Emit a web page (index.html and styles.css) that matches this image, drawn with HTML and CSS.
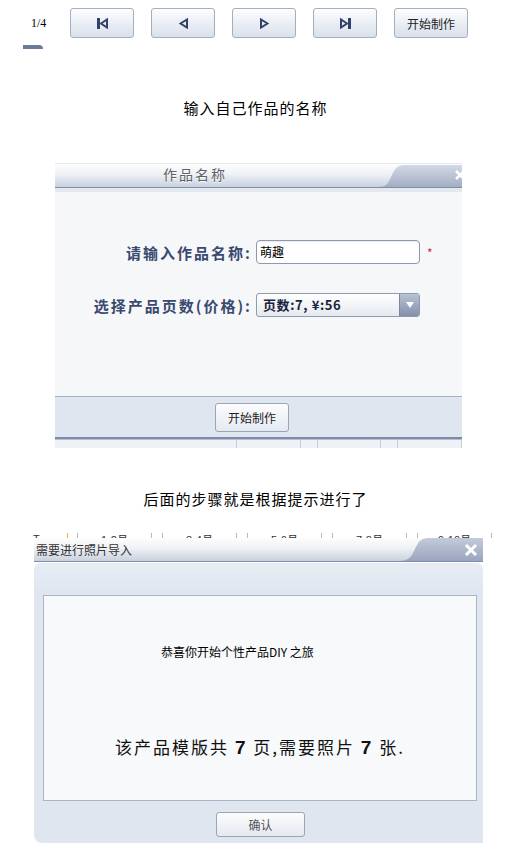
FILE: index.html
```html
<!DOCTYPE html>
<html lang="zh-CN">
<head>
    <meta charset="UTF-8">
    <title>作品制作步骤</title>
    <link rel="stylesheet" href="styles.css">
</head>
<body>
    <div class="toolbar">
        <span class="pager">1/4</span>
        <button class="nav-btn" title="首页">
            <svg width="11" height="11" viewBox="0 0 11 11"><rect x="0" y="0" width="3" height="11" fill="#34426a"/><polygon points="4,5.5 10,1.5 10,9.5" fill="none" stroke="#34426a" stroke-width="2"/></svg>
        </button>
        <button class="nav-btn" title="上一页">
            <svg width="9" height="11" viewBox="0 0 9 11"><polygon points="1.5,5.5 8,1.5 8,9.5" fill="none" stroke="#34426a" stroke-width="2"/></svg>
        </button>
        <button class="nav-btn" title="下一页">
            <svg width="9" height="11" viewBox="0 0 9 11"><polygon points="7.5,5.5 1,1.5 1,9.5" fill="none" stroke="#34426a" stroke-width="2"/></svg>
        </button>
        <button class="nav-btn" title="末页">
            <svg width="11" height="11" viewBox="0 0 11 11"><polygon points="7,5.5 1,1.5 1,9.5" fill="none" stroke="#34426a" stroke-width="2"/><rect x="8" y="0" width="3" height="11" fill="#34426a"/></svg>
        </button>
        <button class="nav-btn text-btn">开始制作</button>
    </div>
    <div class="tab-bit"></div>

    <p class="caption first">输入自己作品的名称</p>

    <div class="dialog name-dialog">
        <div class="dlg-head">
            <span class="dlg-title centered">作品名称</span>
            <svg class="dlg-tab" width="84" height="23" viewBox="0 0 84 23">
                <defs>
                    <linearGradient id="tabA" x1="0" y1="0" x2="0" y2="1">
                        <stop offset="0" stop-color="#d3d9e5"/>
                        <stop offset="1" stop-color="#a3adc3"/>
                    </linearGradient>
                </defs>
                <path d="M0 23 C8 23 10 20 14 11 C18 2 21 1 29 1 L84 1 L84 23 Z" fill="url(#tabA)"/>
                <path d="M78 7 L86 15 M86 7 L78 15" stroke="#fff" stroke-width="2.5"/>
            </svg>
        </div>
        <div class="dlg-sep"></div>
        <div class="name-body">
            <div class="form-grid">
                <label class="form-label" for="workName">请输入作品名称:</label>
                <div class="field" id="workName">萌趣</div>
                <span class="required">*</span>
                <label class="form-label">选择产品页数(价格):</label>
                <div class="select">
                    <span class="select-text">页数:7, ¥:56</span>
                    <span class="select-arrow">
                        <svg width="8" height="6" viewBox="0 0 8 6"><polygon points="0,0 8,0 4,6" fill="#fff"/></svg>
                    </span>
                </div>
                <span></span>
            </div>
        </div>
        <div class="name-foot">
            <button class="plain-btn">开始制作</button>
        </div>
        <div class="under-strip">
            <span class="cell"></span><span class="cell"></span><span class="cell"></span>
        </div>
    </div>

    <p class="caption second">后面的步骤就是根据提示进行了</p>

    <div class="months">
        <span class="m-first">T</span>
        <span class="m-mark"></span>
        <span class="m-cell">1-2月</span>
        <span class="m-cell">3-4月</span>
        <span class="m-cell">5-6月</span>
        <span class="m-cell">7-8月</span>
        <span class="m-cell">9-10月</span>
    </div>

    <div class="dialog import-dialog">
        <div class="dlg-head">
            <span class="dlg-title">需要进行照片导入</span>
            <svg class="dlg-tab" width="85" height="23" viewBox="0 0 85 23">
                <defs>
                    <linearGradient id="tabB" x1="0" y1="0" x2="0" y2="1">
                        <stop offset="0" stop-color="#c3cbdb"/>
                        <stop offset="1" stop-color="#9aa5bd"/>
                    </linearGradient>
                </defs>
                <path d="M0 23 C10 23 13 20 17 11 C21 2 24 0 32 0 L85 0 L85 23 Z" fill="url(#tabB)"/>
                <path d="M68 7 L78 17 M78 7 L68 17" stroke="#fff" stroke-width="3"/>
            </svg>
        </div>
        <div class="import-body">
            <div class="notice">
                <p class="notice-hello">恭喜你开始个性产品DIY 之旅</p>
                <p class="notice-count">该产品模版共 <b>7</b> 页,需要照片 <b>7</b> 张.</p>
            </div>
            <div class="import-foot">
                <button class="plain-btn ok-btn">确认</button>
            </div>
        </div>
    </div>
</body>
</html>
```

FILE: styles.css
```css
body {
    margin: 0;
    background-color: #fff;
    font-family: "Noto Sans CJK SC", "Liberation Sans", sans-serif;
    color: #000;
    width: 511px;
}
.toolbar {
    display: flex;
    align-items: center;
    gap: 17px;
    padding: 8px 0 0 31px;
}
.pager {
    font-family: "Liberation Serif", serif;
    font-size: 12px;
    width: 18px;
    margin-right: 4px;
}
.nav-btn {
    width: 64px;
    height: 30px;
    padding: 0;
    border: 1px solid #a4aebd;
    border-radius: 3px;
    background: linear-gradient(#fdfdfe, #e8edf4 55%, #d9e1ec);
    display: flex;
    align-items: center;
    justify-content: center;
    cursor: pointer;
}
.text-btn {
    width: 74px;
    font-family: "Noto Sans CJK SC", sans-serif;
    font-size: 12px;
    color: #222;
}
.tab-bit {
    width: 20px;
    height: 4px;
    margin: 7px 0 0 23px;
    background-color: #6e7b97;
    border-top-right-radius: 4px;
}
.caption {
    margin: 0;
    text-align: center;
    font-size: 15px;
    line-height: 20px;
    letter-spacing: 1px;
}
.caption.first {
    margin-top: 49px;
}
.caption.second {
    margin-top: 41px;
}

/* dialogs */
.dialog {
    display: flex;
    flex-direction: column;
}
.dlg-head {
    display: flex;
    align-items: center;
    background: linear-gradient(#fdfdfe, #eef1f5 45%, #c9d1de);
    border-top: 1px solid #e6e9ee;
    border-bottom: 1px solid #7f8ea9;
}
.dlg-title {
    flex: 1;
    color: #333;
}
.dlg-title.centered {
    padding: 0 0 4px 108px;
    font-size: 14px;
    line-height: 18px;
    letter-spacing: 2px;
    color: #5d6068;
    text-shadow: 0 1px 0 #fff;
}
.dlg-tab {
    display: block;
    flex-shrink: 0;
}
.name-dialog {
    width: 407px;
    margin: 45px 0 0 55px;
}
.name-dialog .dlg-head {
    height: 23px;
}
.dlg-sep {
    height: 4px;
    background-color: #e4e9f0;
}
.name-body {
    height: 204px;
    background-color: #f6f7f9;
    padding-top: 48px;
    box-sizing: border-box;
}
.form-grid {
    display: grid;
    grid-template-columns: 195px 164px auto;
    column-gap: 6px;
    row-gap: 29px;
    align-items: center;
}
.form-label {
    text-align: right;
    font-size: 15px;
    font-weight: bold;
    letter-spacing: 2px;
    color: #3a4a6e;
    margin-right: -2px;
}
.field {
    height: 24px;
    box-sizing: border-box;
    border: 1px solid #8d99ad;
    border-radius: 4px;
    background-color: #fff;
    padding-left: 3px;
    font-size: 12px;
    line-height: 22px;
    box-shadow: inset 0 1px 1px rgba(0,0,0,0.08);
}
.required {
    color: #c8302c;
    font-size: 12px;
    padding-left: 1px;
}
.select {
    height: 24px;
    box-sizing: border-box;
    display: flex;
    border: 1px solid #8f9bb0;
    border-radius: 3px;
    background: linear-gradient(#ffffff, #e5e9ef);
    overflow: hidden;
}
.select-text {
    flex: 1;
    padding-left: 6px;
    font-size: 13px;
    font-weight: bold;
    letter-spacing: 0.6px;
    line-height: 22px;
    color: #18243c;
}
.select-arrow {
    width: 19px;
    display: flex;
    align-items: center;
    justify-content: center;
    background: linear-gradient(#b8c2d3, #8390aa);
    border-left: 1px solid #7a88a3;
}
.name-foot {
    height: 40px;
    background-color: #dfe6f0;
    border-top: 1px solid #a5b1c4;
    border-bottom: 2px solid #7c8ba6;
    display: flex;
    align-items: center;
    padding-left: 160px;
}
.plain-btn {
    width: 74px;
    height: 29px;
    padding: 0;
    border: 1px solid #9aa5b6;
    border-radius: 3px;
    background: linear-gradient(#fdfdfe, #e4e9f1);
    font-family: "Noto Sans CJK SC", sans-serif;
    font-size: 12px;
    color: #222;
    cursor: pointer;
}
.under-strip {
    height: 8px;
    border-top: 1px solid #b5bfcf;
    background-color: #eef1f6;
    display: flex;
    padding-left: 181px;
    gap: 16px;
}
.cell {
    width: 63px;
    border-left: 1px solid #c5cdd9;
    border-right: 1px solid #c5cdd9;
}

/* clipped timeline row */
.months {
    height: 5px;
    overflow: hidden;
    margin-top: 24px;
    display: flex;
    align-items: flex-start;
    font-family: "Liberation Sans", sans-serif;
    font-size: 11px;
    line-height: 12px;
    color: #333;
}
.m-first {
    margin-left: 33px;
    width: 34px;
}
.m-mark {
    width: 1px;
    height: 5px;
    background-color: #e2b43c;
    margin-right: 9px;
}
.m-cell {
    width: 73px;
    height: 5px;
    text-align: center;
    border-left: 1px solid #bbb;
    border-right: 1px solid #bbb;
    margin-right: 10px;
    padding-top: 1px;
}

.import-dialog {
    width: 449px;
    margin-left: 34px;
}
.import-dialog .dlg-head {
    height: 23px;
    border-top: none;
}
.import-dialog .dlg-title {
    padding-left: 2px;
    font-size: 12px;
    color: #333;
}
.import-body {
    margin-top: 1px;
    height: 280px;
    box-sizing: border-box;
    background: linear-gradient(#e8edf4, #dfe6f0 30px);
    border-radius: 6px 6px 0 8px;
    padding: 32px 6px 0 9px;
    display: flex;
    flex-direction: column;
}
.notice {
    height: 206px;
    box-sizing: border-box;
    border: 1px solid #a9b4c4;
    background-color: #f7f9fb;
    padding-top: 49px;
}
.notice p {
    margin: 0;
}
.notice-hello {
    padding-left: 117px;
    font-size: 12px;
    line-height: 14px;
}
.notice-count {
    margin-top: 77px !important;
    text-align: center;
    font-size: 17px;
    line-height: 22px;
    letter-spacing: 2px;
    color: #111;
}
.notice-count b {
    font-family: "Liberation Sans", sans-serif;
    font-size: 19px;
}
.import-foot {
    padding: 10px 0 0 173px;
}
.ok-btn {
    width: 89px;
    height: 25px;
    color: #555;
}
```
